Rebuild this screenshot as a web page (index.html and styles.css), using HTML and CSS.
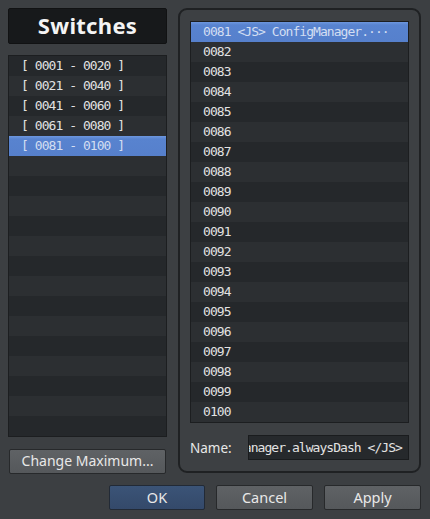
FILE: index.html
```html
<!DOCTYPE html>
<html>
<head>
<meta charset="utf-8">
<link rel="stylesheet" href="styles.css">
</head>
<body>
<div class="window">
  <div class="main">
    <div class="left">
      <div class="title">Switches</div>
      <div class="list groups">
        <div class="row">[ 0001 - 0020 ]</div>
        <div class="row">[ 0021 - 0040 ]</div>
        <div class="row">[ 0041 - 0060 ]</div>
        <div class="row">[ 0061 - 0080 ]</div>
        <div class="row sel">[ 0081 - 0100 ]</div>
        <div class="row"></div><div class="row"></div><div class="row"></div><div class="row"></div><div class="row"></div>
        <div class="row"></div><div class="row"></div><div class="row"></div><div class="row"></div><div class="row"></div>
        <div class="row"></div><div class="row"></div><div class="row"></div><div class="row"></div>
      </div>
      <div class="btn wide">Change Maximum...</div>
    </div>
    <div class="panel">
      <div class="list items">
        <div class="row sel">0081 &lt;JS&gt; ConfigManager.···</div>
        <div class="row">0082</div>
        <div class="row">0083</div>
        <div class="row">0084</div>
        <div class="row">0085</div>
        <div class="row">0086</div>
        <div class="row">0087</div>
        <div class="row">0088</div>
        <div class="row">0089</div>
        <div class="row">0090</div>
        <div class="row">0091</div>
        <div class="row">0092</div>
        <div class="row">0093</div>
        <div class="row">0094</div>
        <div class="row">0095</div>
        <div class="row">0096</div>
        <div class="row">0097</div>
        <div class="row">0098</div>
        <div class="row">0099</div>
        <div class="row">0100</div>
      </div>
      <div class="namerow">
        <span class="label">Name:</span>
        <div class="input"><span class="val">&lt;JS&gt; ConfigManager.alwaysDash &lt;/JS&gt;</span></div>
      </div>
    </div>
  </div>
  <div class="footer">
    <div class="btn ok">OK</div>
    <div class="btn">Cancel</div>
    <div class="btn">Apply</div>
  </div>
</div>
</body>
</html>
```

FILE: styles.css
```css
html, body {
  margin: 0;
  padding: 0;
  background: #3c3f42;
  width: 430px;
  height: 519px;
  overflow: hidden;
}
.window {
  padding: 8px 9px 0 8px;
  display: flex;
  flex-direction: column;
  font-family: "Noto Sans", "DejaVu Sans", sans-serif;
  color: #e6e6e6;
}
.main {
  display: flex;
  gap: 11px;
}
.left {
  width: 159px;
  display: flex;
  flex-direction: column;
}
.title {
  height: 34px;
  background: #17191b;
  border: 1px solid #111213;
  border-radius: 2px;
  color: #f4f4f4;
  font-weight: bold;
  font-size: 22px;
  line-height: 33px;
  text-align: center;
  letter-spacing: 0.3px;
}
.list {
  border: 1px solid #1c1e20;
  background: #26292c;
  font-family: "DejaVu Sans Mono", "Liberation Mono", monospace;
  font-size: 13px;
  letter-spacing: -0.95px;
  color: #e2e2e2;
}
.groups {
  margin-top: 11px;
  height: 380px;
}
.row {
  height: 20px;
  line-height: 20px;
  padding-left: 12px;
  white-space: pre;
  overflow: hidden;
  background: #25282b;
}
.row:nth-child(even) {
  background: #2c2f32;
}
.row.sel {
  background: linear-gradient(#6d97de, #5883cf 15%, #5680cc);
  color: #d3def2;
}
.btn {
  height: 23px;
  border: 1px solid #27292b;
  border-radius: 2px;
  background: linear-gradient(#5f6265, #55585b);
  color: #e8e8e8;
  font-size: 14px;
  line-height: 22px;
  text-align: center;
  box-sizing: content-box;
}
.wide {
  margin-top: 12px;
  margin-left: 1px;
  width: 155px;
}
.panel {
  border: 2px solid #1f2123;
  border-radius: 9px;
  background: #3d4043;
  padding: 11px 10px 0 10px;
  box-sizing: content-box;
  width: 219px;
  height: 450px;
  display: flex;
  flex-direction: column;
}
.items {
  height: 400px;
}
.namerow {
  margin-top: 12px;
  display: flex;
  align-items: center;
  justify-content: space-between;
  height: 25px;
}
.label {
  font-size: 13.5px;
  color: #e8e8e8;
  margin-top: 1px;
}
.input {
  border: 1px solid #1a1c1e;
  background: #26292c;
  display: flex;
  justify-content: flex-end;
  overflow: hidden;
  padding-right: 6px;
  box-sizing: border-box;
  width: 161px;
  height: 25px;
  font-family: "DejaVu Sans Mono", "Liberation Mono", monospace;
  font-size: 13px;
  letter-spacing: -0.95px;
  line-height: 23px;
  color: #e2e2e2;
}
.val {
  white-space: pre;
  flex-shrink: 0;
}
.footer {
  margin-top: 11px;
  display: flex;
  justify-content: flex-end;
  gap: 11px;
}
.footer .btn {
  width: 95px;
  height: 23px;
  font-size: 14.5px;
}
.footer .ok {
  width: 94px;
  background: linear-gradient(#3b5477, #34496a);
  border-color: #222a36;
}
```
